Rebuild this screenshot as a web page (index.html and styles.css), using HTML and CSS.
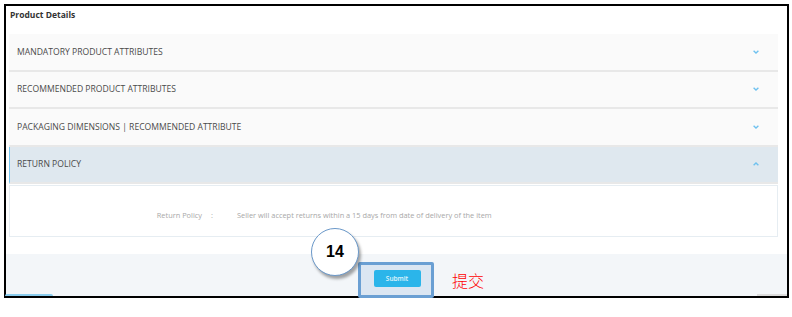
FILE: index.html
```html
<!DOCTYPE html>
<html>
<head>
<meta charset="utf-8">
<link rel="stylesheet" href="styles.css">
</head>
<body>
<div class="frame">
  <div class="title">Product Details</div>
  <div class="accordion">
    <div class="row"><span>MANDATORY PRODUCT ATTRIBUTES</span><svg class="chev" width="6" height="4" viewBox="0 0 6 4"><path d="M0.6 0.8 L3 3 L5.4 0.8" fill="none" stroke="#6ec1ef" stroke-width="1.4"/></svg></div>
    <div class="row"><span>RECOMMENDED PRODUCT ATTRIBUTES</span><svg class="chev" width="6" height="4" viewBox="0 0 6 4"><path d="M0.6 0.8 L3 3 L5.4 0.8" fill="none" stroke="#6ec1ef" stroke-width="1.4"/></svg></div>
    <div class="row"><span>PACKAGING DIMENSIONS | RECOMMENDED ATTRIBUTE</span><svg class="chev" width="6" height="4" viewBox="0 0 6 4"><path d="M0.6 0.8 L3 3 L5.4 0.8" fill="none" stroke="#6ec1ef" stroke-width="1.4"/></svg></div>
    <div class="row active"><span>RETURN POLICY</span><svg class="chev" width="6" height="4" viewBox="0 0 6 4"><path d="M0.6 3.2 L3 1 L5.4 3.2" fill="none" stroke="#6ec1ef" stroke-width="1.4"/></svg></div>
    <div class="panel">
      <span class="label">Return Policy</span>
      <span class="colon">:</span>
      <span class="value">Seller will accept returns within a 15 days from date of delivery of the item</span>
    </div>
  </div>
  <div class="footer">
    <button class="submit">Submit</button>
  </div>
  <div class="tab-left"></div>
  <div class="tab-right"></div>
  <div class="highlight"></div>
  <div class="step">14</div>
  <div class="note">提交</div>
</div>
</body>
</html>
```
FILE: styles.css
```css
html, body {
  margin: 0;
  padding: 0;
  background: #fff;
}
body {
  font-family: "Open Sans", "Liberation Sans", sans-serif;
}
.frame {
  position: relative;
  margin: 4px 0 0 4px;
  width: 785px;
  box-sizing: border-box;
  border: 2px solid #000;
  display: flex;
  flex-direction: column;
}
.title {
  height: 28px;
  box-sizing: border-box;
  padding: 2px 0 0 4px;
  font-size: 8.5px;
  font-weight: 700;
  line-height: 14px;
  color: #333;
}
.accordion {
  margin: 0 9px 0 3px;
  display: flex;
  flex-direction: column;
}
.row {
  height: 37.5px;
  box-sizing: border-box;
  border-bottom: 2px solid #e8e8e8;
  background: #fafafa;
  display: flex;
  align-items: center;
  justify-content: space-between;
  padding: 0 19px 0 8px;
  font-size: 8.6px;
  color: #4a4a4a;
}
.row.active {
  background: #dfe8ef;
  border-left: 1px solid #76c6ee;
  padding-left: 7px;
}
.chev {
  display: block;
}
.panel {
  margin-top: 1px;
  height: 52px;
  box-sizing: border-box;
  border: 1px solid #e6edf2;
  background: #fff;
  display: flex;
  align-items: flex-start;
  padding-top: 23px;
  font-size: 7.4px;
  line-height: 12px;
  color: #a8a8a8;
}
.label {
  width: 192px;
  text-align: right;
}
.colon {
  width: 20px;
  text-align: center;
}
.value {
  margin-left: 15px;
}
.footer {
  margin-top: 17px;
  height: 42px;
  background: #f3f6f9;
  display: flex;
  justify-content: center;
  align-items: flex-start;
  padding-top: 16px;
  box-sizing: border-box;
}
.submit {
  position: relative;
  z-index: 2;
  width: 47px;
  height: 17px;
  border: none;
  border-radius: 2px;
  background: #2bb5ea;
  color: #e3f5fc;
  font-family: "Open Sans", "Liberation Sans", sans-serif;
  font-size: 6.5px;
  font-weight: 600;
  padding: 0;
  margin-left: 1px;
}
.tab-left {
  position: absolute;
  left: -1px;
  bottom: 0;
  width: 48px;
  height: 2px;
  background: #8bcdee;
  border-radius: 2px 2px 0 0;
}
.tab-right {
  position: absolute;
  right: 0;
  bottom: 0;
  width: 30px;
  height: 2px;
  background: #dcdcdc;
}
.highlight {
  position: absolute;
  left: 352px;
  top: 256px;
  width: 76px;
  height: 36px;
  box-sizing: border-box;
  border: 3px solid #6a9fd3;
  background: #dbe6f2;
  border-radius: 2px;
  z-index: 1;
}
.step {
  position: absolute;
  left: 305px;
  top: 222px;
  width: 48px;
  height: 48px;
  box-sizing: border-box;
  border: 1.5px solid #6a98c9;
  border-radius: 50%;
  background: #fff;
  box-shadow: 2px 3px 3px rgba(0, 0, 0, 0.35);
  display: flex;
  align-items: center;
  justify-content: center;
  font-family: "Liberation Sans", Arial, sans-serif;
  font-size: 16px;
  font-weight: 700;
  color: #000;
  z-index: 3;
}
.note {
  position: absolute;
  left: 446px;
  top: 264px;
  font-family: "Noto Sans CJK SC", sans-serif;
  font-size: 16px;
  font-weight: 300;
  line-height: 20px;
  color: #ff0000;
}
```
